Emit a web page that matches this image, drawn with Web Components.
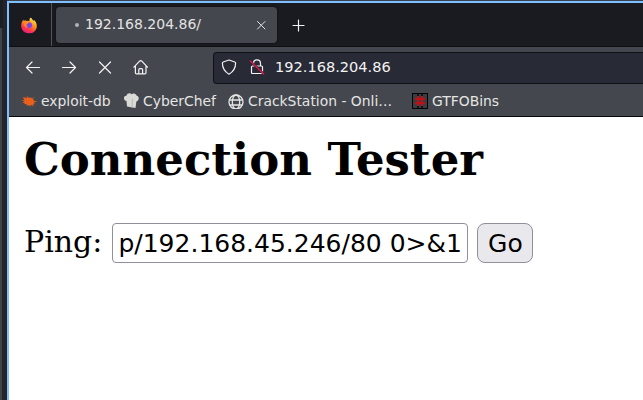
<!DOCTYPE html>
<html lang="en"><head><meta charset="utf-8"><title>Connection Tester</title>
<style>html,body{margin:0;height:100%;overflow:hidden}body{font-family:"DejaVu Sans",sans-serif}</style></head>
<body><browser-window></browser-window>
<script>
const define=(name,markup)=>customElements.define(name,class extends HTMLElement{
  constructor(){super();this.attachShadow({mode:'open'}).innerHTML=markup;}
});
const icons={
firefox:`<svg viewBox="0 0 16 16" style="stroke:none"><defs><linearGradient id="f" x1=".8" y1="0" x2=".3" y2="1"><stop stop-color="#fff04a"/><stop offset=".4" stop-color="#ff981f"/><stop offset=".72" stop-color="#ff3b47"/><stop offset="1" stop-color="#e31587"/></linearGradient><radialGradient id="p"><stop stop-color="#6548d8"/><stop offset="1" stop-color="#9b45df"/></radialGradient></defs><path fill="url(#f)" d="M9.6 0c1.6 1 1.9 2.2 2.5 3.1.8.3.9-.2.8-.9 1.5 1.3 2.8 3.5 2.9 5.8.2 4.500-3.200 8-7.800 8S.2 12.500.2 8.300C.2 5.500 1.300 3.600 2.300 2.100l.5 1.700L4.400 2.300l.3 1.500c1.300-.6 2.700-.6 3.800.1C8.200 2.200 8.600.9 9.600 0z"/><circle cx="8.200" cy="7.700" r="3" fill="url(#p)"/><path fill="#ff8a25" d="M2.800 4.200c1.600-.8 3.800-.4 5 .8-.5 1.200-1.900 1.100-2.500 2.300-.2.900.5 1.700 1.500 1.800l-1.800 1.200C3.300 8.700 2.500 6.200 2.800 4.200z"/></svg>`,
back:`<svg viewBox="0 0 16 16"><path d="M14.500 8.500H1.500M7 3 1.500 8.500 7 14"/></svg>`,
forward:`<svg viewBox="0 0 16 16"><path d="M1.500 8.500h13M9 3 14.500 8.500 9 14"/></svg>`,
stop:`<svg viewBox="0 0 16 16"><path d="m2.500 3 11 11m0-11-11 11"/></svg>`,
close:`<svg viewBox="0 0 16 16"><path d="m4.500 4.500 7.500 7.500m0-7.500L4.500 12" style="stroke-width:1"/></svg>`,
plus:`<svg viewBox="0 0 16 16"><path d="M8.500 3v11M3 8.500h11"/></svg>`,
home:`<svg viewBox="0 0 16 16"><path d="m.9 8.200 5.700-6q1.100-1 2.200 0l5.700 6M2.400 7.200v6.500q0 1.200 1.200 1.200h8.200q1.200 0 1.200-1.200V7.200M5.800 14.700v-4q0-1 1-1h1.800q1 0 1 1v4"/></svg>`,
shield:`<svg viewBox="0 0 16 16"><path d="m8 1 5.800 2q.8.300.8 1.100C14.600 9.600 12 13 8 15.200 4 13 1.400 9.600 1.400 4.100q0-.8.800-1.100z"/></svg>`,
lock:`<svg viewBox="0 0 16 16"><path d="M4.500 7V4.400a3.500 3.500 0 0 1 7 0V7M3.500 7h9q1 0 1 1v5.500q0 1-1 1h-9q-1 0-1-1V8q0-1 1-1z"/><path d="M1.200 2 14.800 15" style="stroke:#282a36;stroke-width:2.400"/><path d="M1.200 2 14.800 15" style="stroke:#ef174b"/></svg>`,
bug:`<svg viewBox="0 0 16 16"><path style="fill:#e95f1c;stroke:none" d="M2 4 L6 5 L6.500 2.800 L7.500 4.800 L10 4.500 L12 6 L13 8 L15 8.500 L13.200 9.200 L13.500 11 L12 10.800 L13 13 L10.500 12 L9 12.500 L5 12.300 L6 11.300 L3 11 L4 10 L1 9.300 L3.500 8.800 L.5 7 L3.500 7.200 L2.500 5.500z"/><path style="stroke:#e95f1c;stroke-width:.6" d="m11 6 2-1.500M12 8l3.500.6M8 12l1.500 1.500"/></svg>`,
chef:`<svg viewBox="0 0 16 16"><path style="fill:#d9d9d6;stroke:none" d="M2.500 8C-1 7.500-.8 2.500 2.500 2.800c.6-3 4-3 5-1.600C9.500-.4 12.500.8 12.700 2.800c3 .5 2.600 5-.4 5.900L11.500 15l-8.500-1.600z"/><path style="stroke:#bcbcba;fill:none" d="m8.500 6-.4 8"/></svg>`,
globe:`<svg viewBox="0 0 16 16" style="stroke-width:1.300"><circle cx="8" cy="9" r="7"/><ellipse cx="8" cy="9" rx="3.700" ry="7"/><path d="M1.500 7h13M2.500 12h11"/></svg>`,
hash:`<svg viewBox="0 0 16 16" shape-rendering="crispEdges" style="stroke:none"><path fill="#050505" d="M0 0h16v16H0z"/><path fill="#3b3d42" d="M1 1h14v14H1z"/><path fill="#151517" d="M5 1h2v14H5zM9 1h2v14H9z"/><path fill="#bd1118" d="M5 3h2v10H5zM9 3h2v10H9zM3 5h10v2H3zM3 9h10v2H3z"/></svg>`};
customElements.define('ui-icon',class extends HTMLElement{
  constructor(){super();this.attachShadow({mode:'open'});}
  connectedCallback(){this.shadowRoot.innerHTML=`<style>:host{display:block;flex:none;width:16px;height:16px}svg{display:block;width:100%;height:100%;fill:none;stroke:currentColor;stroke-width:1.2;stroke-linecap:round;stroke-linejoin:round}</style>${icons[this.getAttribute('name')]}`;}
});
define('tab-strip',`<style>:host{display:flex;height:43px;background:#1a1b20;border-bottom:1px solid #0d0e11;color:#f1f1f3}
.pin{width:42px;border-right:1px solid #515359;display:grid;place-items:center}.pin ui-icon{transform:translate(-1px,.5px)}
.tab{box-sizing:border-box;width:221px;height:36px;margin:4px 0 0 4px;border-radius:4px;background:#44474e;display:flex;align-items:center;padding:0 8px 0 19px;font-size:14px;color:#e3e3e3;box-shadow:0 0 2px #08090b}
.tab span{padding-bottom:2px}.dot{width:4px;height:4px;border-radius:50%;background:#b2b3b6;margin-right:6px}.tab ui-icon{margin-left:auto}.plus{margin:14px 0 0 13px}</style>
<div class="pin"><ui-icon name="firefox"></ui-icon></div><div class="tab"><i class="dot"></i><span>192.168.204.86/</span><ui-icon name="close"></ui-icon></div><ui-icon class="plus" name="plus"></ui-icon>`);
define('nav-bar',`<style>:host{display:flex;align-items:center;height:41px;padding-left:16px;gap:20px;color:#f3f3f3}
.nav{margin-bottom:1px}
.url{box-sizing:border-box;height:32px;flex:1;margin-left:44px;border:1px solid #101116;border-right:0;border-radius:4px 0 0 4px;background:#282a36;display:flex;align-items:center;padding:0 0 1px 7px;gap:12px;font-size:14.55px}.url span{margin-left:-2px;padding-bottom:1px}</style>
<ui-icon class="nav" name="back"></ui-icon><ui-icon class="nav" name="forward"></ui-icon><ui-icon class="nav" name="stop"></ui-icon><ui-icon class="nav" name="home"></ui-icon><div class="url"><ui-icon name="shield"></ui-icon><ui-icon name="lock"></ui-icon><span>192.168.204.86</span></div>`);
define('book-mark',`<style>:host{display:flex;align-items:center;gap:var(--gap,4px);font-size:13.9px;white-space:nowrap}</style><slot name="icon"></slot><slot></slot>`);
define('bookmarks-bar',`<style>:host{display:flex;height:28px;border-bottom:1px solid #08090b;padding-left:12px;color:#e5e5e3}book-mark{height:26px}</style>
<book-mark style="width:103px"><ui-icon slot="icon" name="bug"></ui-icon>exploit-db</book-mark><book-mark style="width:104px;--gap:3px"><ui-icon slot="icon" name="chef"></ui-icon>CyberChef</book-mark><book-mark style="width:184px;--gap:4px"><ui-icon slot="icon" name="globe"></ui-icon>CrackStation - Onli…</book-mark><book-mark><ui-icon slot="icon" name="hash"></ui-icon>GTFOBins</book-mark>`);
define('connection-page',`<style>:host{display:block;flex:1;background:#fff;color:#000;padding:16px 15px 0;font-family:"DejaVu Serif",serif}
h1{font-size:45px;line-height:54px;margin:0 0 36px;white-space:nowrap}form{display:flex;align-items:center;font-size:30px;height:40px}label{margin-right:10px;line-height:38px;padding-bottom:2px}
.input,button{box-sizing:border-box;height:40px;border:1px solid #8f8f9d;font:25px "DejaVu Sans",sans-serif;color:#000}.input{width:356px;border-radius:4px;padding:0 5px;line-height:40px;white-space:nowrap;overflow:hidden}button{width:56px;margin-left:9px;padding:0;border-radius:8px;background:#e9e9ed}</style>
<h1>Connection Tester</h1><form><label>Ping:</label><div class="input" role="textbox">p/192.168.45.246/80 0&gt;&amp;1</div><button type="button">Go</button></form>`);
define('browser-window',`<style>:host{box-sizing:border-box;display:flex;height:400px;padding-top:1px;background:linear-gradient(90deg,#41434a 0 2px,#24252b 2px 5px,#22242c 5px 7px,#3b4050 7px)}
main{flex:1;min-width:0;border-top:2px solid #80bfff;border-left:2px solid #80bfff;margin-left:7px;background:#44474e;display:flex;flex-direction:column}
.behind{position:absolute;left:0;top:0;width:3px;height:28px;background:#1c1e26}</style>
<div class="behind"></div><main><tab-strip></tab-strip><nav-bar></nav-bar><bookmarks-bar></bookmarks-bar><connection-page></connection-page></main>`);
</script></body></html>
